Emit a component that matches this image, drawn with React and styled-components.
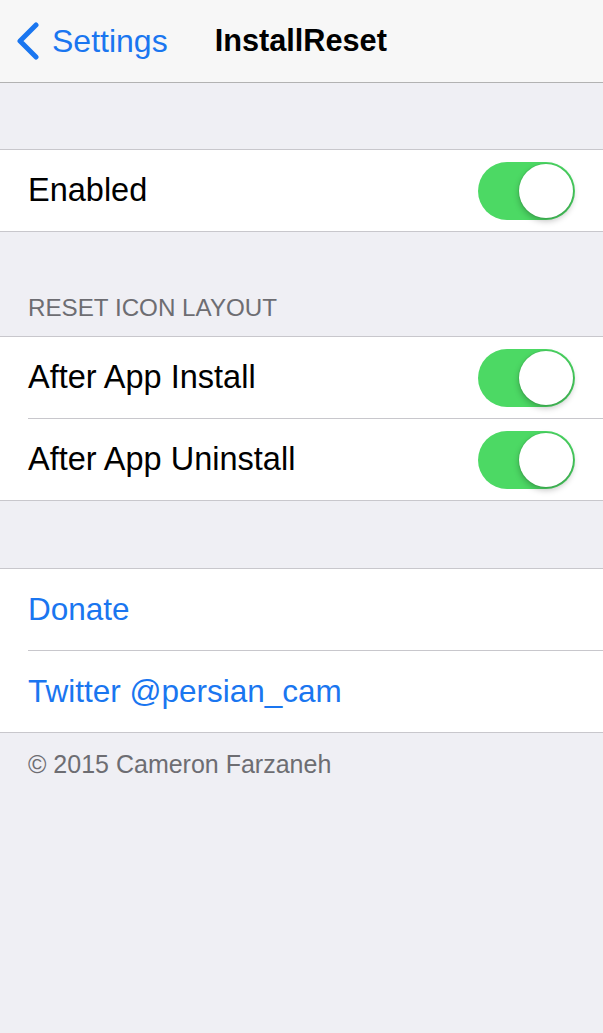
import styled, { createGlobalStyle } from "styled-components";

const GlobalStyle = createGlobalStyle`
  html, body {
    margin: 0;
    padding: 0;
    background: #efeff4;
    font-family: "Liberation Sans", Arial, sans-serif;
  }
`;

const Page = styled.div`
  width: 603px;
  min-height: 1033px;
  background: #efeff4;
`;

const NavBar = styled.div`
  height: 83px;
  background: #f7f7f7;
  border-bottom: 1px solid #b2b2b2;
  display: flex;
  align-items: center;
  box-sizing: border-box;
`;

const BackButton = styled.div`
  display: flex;
  align-items: center;
  gap: 11px;
  padding-left: 15px;
  color: #1a76f0;
  font-size: 32px;
`;

const NavTitle = styled.div`
  margin-left: 47px;
  font-size: 30.7px;
  font-weight: bold;
  color: #000;
`;

const Group = styled.div`
  background: #fff;
  border-top: 1px solid #c8c7cc;
  border-bottom: 1px solid #c8c7cc;
  margin-top: ${(p) => p.$top}px;
`;

const Row = styled.div`
  height: 81px;
  display: flex;
  align-items: center;
  justify-content: space-between;
  padding: 0 28px;
  font-size: ${(p) => (p.$link ? "31.5px" : "32.5px")};
  color: ${(p) => (p.$link ? "#1a76f0" : "#000")};

  & + & {
    border-top: 1px solid #c8c7cc;
    margin-left: 28px;
    padding-left: 0;
  }
`;

const SectionHeader = styled.div`
  margin-top: 62px;
  padding: 0 28px 14px;
  font-size: 24.2px;
  color: #6d6d72;
  text-transform: uppercase;
`;

const Footer = styled.div`
  padding: 17px 28px;
  font-size: 25px;
  color: #6d6d72;
`;

const Switch = styled.div`
  width: 97px;
  height: 58px;
  border-radius: 29px;
  background: #4cd964;
  position: relative;
`;

const Knob = styled.div`
  position: absolute;
  top: 2px;
  right: 2px;
  width: 54px;
  height: 54px;
  border-radius: 50%;
  background: #fff;
  box-shadow: 0 3px 6px rgba(0, 0, 0, 0.25), 0 0 0 1px rgba(0, 0, 0, 0.06);
`;

function Toggle() {
  return (
    <Switch>
      <Knob />
    </Switch>
  );
}

function Chevron() {
  return (
    <svg width="26" height="38" viewBox="0 0 26 38">
      <path
        d="M21 3 L5 19 L21 35"
        fill="none"
        stroke="#1a76f0"
        strokeWidth="5"
        strokeLinecap="round"
        strokeLinejoin="round"
      />
    </svg>
  );
}

export default function App() {
  return (
    <Page>
      <GlobalStyle />
      <NavBar>
        <BackButton>
          <Chevron />
          Settings
        </BackButton>
        <NavTitle>InstallReset</NavTitle>
      </NavBar>

      <Group $top={66}>
        <Row>
          Enabled
          <Toggle />
        </Row>
      </Group>

      <SectionHeader>Reset Icon Layout</SectionHeader>
      <Group $top={0}>
        <Row>
          After App Install
          <Toggle />
        </Row>
        <Row>
          After App Uninstall
          <Toggle />
        </Row>
      </Group>

      <Group $top={67}>
        <Row $link>Donate</Row>
        <Row $link>Twitter @persian_cam</Row>
      </Group>

      <Footer>© 2015 Cameron Farzaneh</Footer>
    </Page>
  );
}
